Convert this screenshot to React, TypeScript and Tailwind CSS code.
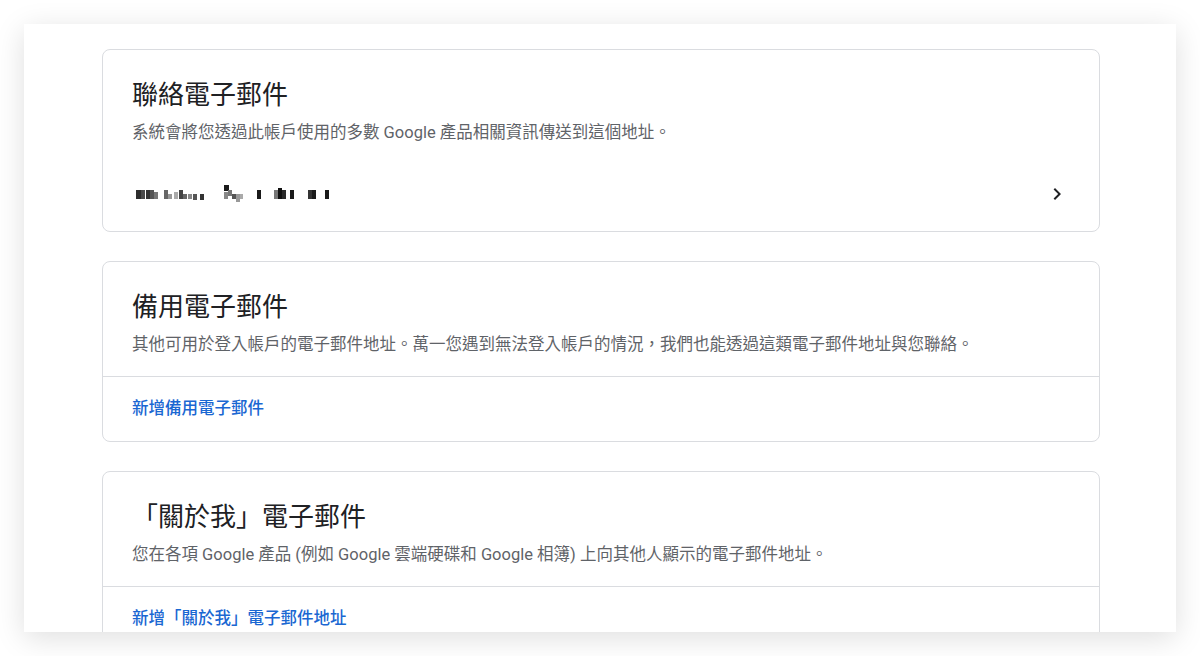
import React from "react";

const font = { fontFamily: '"Roboto", "Noto Sans CJK TC", "Noto Sans CJK SC", sans-serif' };

const cells: [number, number, number, number, string][] = [
  // x, y, w, h, color  (relative to mosaic origin)
  [0, 6, 5, 9, "#2e2e2e"],
  [5, 6, 4, 9, "#4a4a4a"],
  [10, 6, 4, 9, "#333"],
  [14, 6, 4, 9, "#555"],
  [18, 8, 4, 7, "#777"],
  [28, 6, 4, 9, "#666"],
  [32, 10, 4, 5, "#999"],
  [38, 8, 4, 7, "#aaa"],
  [43, 6, 4, 9, "#444"],
  [47, 10, 4, 5, "#666"],
  [52, 10, 4, 5, "#888"],
  [57, 10, 4, 6, "#555"],
  [64, 10, 4, 6, "#333"],
  [88, 1, 5, 6, "#1a1a1a"],
  [92, 6, 4, 6, "#777"],
  [88, 8, 4, 7, "#888"],
  [96, 10, 4, 5, "#555"],
  [100, 10, 4, 8, "#999"],
  [104, 10, 3, 5, "#aaa"],
  [121, 6, 4, 9, "#1a1a1a"],
  [138, 6, 4, 9, "#777"],
  [142, 4, 4, 11, "#111"],
  [146, 6, 4, 9, "#2a2a2a"],
  [154, 6, 4, 9, "#1a1a1a"],
  [172, 6, 4, 9, "#333"],
  [176, 6, 4, 9, "#1a1a1a"],
  [189, 6, 4, 9, "#1a1a1a"],
];

function Mosaic() {
  return (
    <svg width="200" height="20" viewBox="0 0 200 20" className="block">
      {cells.map(([x, y, w, h, c], i) => (
        <rect key={i} x={x} y={y} width={w} height={h} fill={c} />
      ))}
    </svg>
  );
}

function Chevron() {
  return (
    <svg width="24" height="24" viewBox="0 0 24 24" className="block">
      <path d="M10 6L8.59 7.41 13.17 12l-4.58 4.59L10 18l6-6z" fill="#202124" />
    </svg>
  );
}

function Header({ title, desc }: { title: string; desc: string }) {
  return (
    <div className="pt-[29px] px-[29px]">
      <div className="text-[26px] leading-[32px] text-[#202124]">{title}</div>
      <div className="mt-[10px] text-[16.5px] leading-[24px] text-[#5f6368]">{desc}</div>
    </div>
  );
}

function LinkCard({ title, desc, link }: { title: string; desc: string; link: string }) {
  return (
    <div className="border border-[#dadce0] rounded-[8px] bg-white">
      <Header title={title} desc={desc} />
      <div className="h-[19px]" />
      <div className="border-t border-[#dadce0] h-[65px] flex items-center px-[29px]">
        <span className="text-[16.5px] leading-[24px] font-medium text-[#1a67d2]">{link}</span>
      </div>
    </div>
  );
}

export default function App() {
  return (
    <div className="w-[1200px] h-[656px] bg-white pt-[24px] px-[24px]" style={font}>
      <div className="h-[608px] bg-white overflow-hidden shadow-[0_6px_28px_rgba(0,0,0,0.13)] pt-[25px] pl-[78px] pr-[76px] flex flex-col gap-[29px]">
        <div className="border border-[#dadce0] rounded-[8px] bg-white shrink-0">
          <Header
            title="聯絡電子郵件"
            desc="系統會將您透過此帳戶使用的多數 Google 產品相關資訊傳送到這個地址。"
          />
          <div className="mt-[25px] h-[48px] flex items-center justify-between pl-[4px] pr-[30px] mb-[13px] ml-[29px]">
            <Mosaic />
            <Chevron />
          </div>
        </div>
        <div className="shrink-0">
          <LinkCard
            title="備用電子郵件"
            desc="其他可用於登入帳戶的電子郵件地址。萬一您遇到無法登入帳戶的情況，我們也能透過這類電子郵件地址與您聯絡。"
            link="新增備用電子郵件"
          />
        </div>
        <div className="shrink-0">
          <LinkCard
            title="「關於我」電子郵件"
            desc="您在各項 Google 產品 (例如 Google 雲端硬碟和 Google 相簿) 上向其他人顯示的電子郵件地址。"
            link="新增「關於我」電子郵件地址"
          />
        </div>
      </div>
    </div>
  );
}
